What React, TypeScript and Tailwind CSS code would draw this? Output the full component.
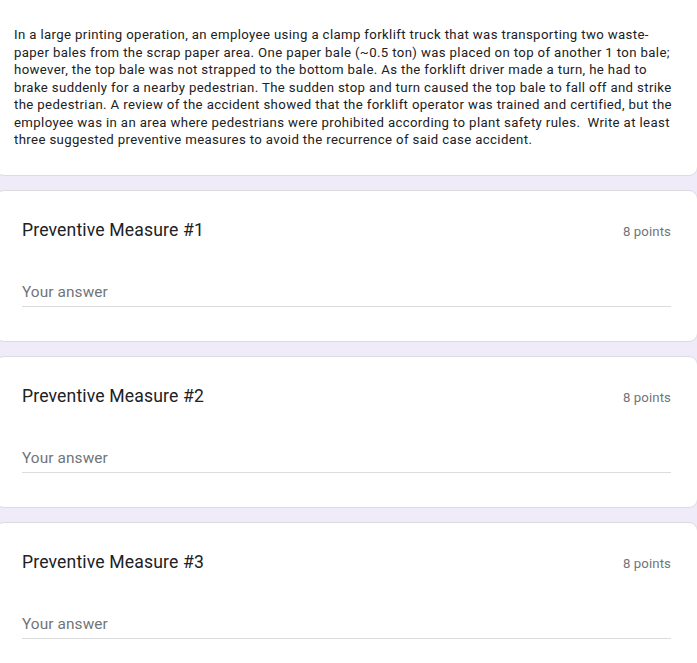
import React from "react";

const font = { fontFamily: "Roboto, 'Liberation Sans', Arial, sans-serif" };

function Question({ n }: { n: number }) {
  return (
    <div className="ml-[-5px] w-[703px] bg-white border border-[#dadce0] rounded-[9px] px-[26px] pt-[26px] pb-[34px]">
      <div className="flex items-start justify-between h-[26px]">
        <div className="text-[17.6px] leading-[26px] text-[#202124] tracking-[0.14px]">
          Preventive Measure #{n}
        </div>
        <div className="mt-[3px] text-[13.2px] leading-[23px] text-[#70757a] tracking-[0.1px]">8 points</div>
      </div>
      <div className="mt-[39px] border-b border-[#dadce0] pb-[4px]">
        <div className="text-[15.4px] leading-[20px] text-[#70757a] tracking-[0.1px]">Your answer</div>
      </div>
    </div>
  );
}

export default function App() {
  return (
    <div className="w-[697px] h-[663px] overflow-hidden bg-[#f0ebf8]" style={font}>
      <div className="flex flex-col gap-[14px]">
        <div className="ml-[-5px] w-[703px] mt-[-10px] bg-white border border-[#dadce0] rounded-[9px] pl-[18px] pr-[24px] pt-[35px] pb-[26px]">
          <p className="text-[13.2px] leading-[17.5px] text-[#202124] tracking-[0.37px]">
            In a large printing operation, an employee using a clamp forklift truck that was transporting two waste-paper bales from the scrap paper area. One paper bale (~0.5 ton) was placed on top of another 1 ton bale; however, the top bale was not strapped to the bottom bale. As the forklift driver made a turn, he had to brake suddenly for a nearby pedestrian. The sudden stop and turn caused the top bale to fall off and strike the pedestrian. A review of the accident showed that the forklift operator was trained and certified, but the employee was in an area where pedestrians were prohibited according to plant safety rules.{"\u00a0 "}Write at least three suggested preventive measures to avoid the recurrence of said case accident.
          </p>
        </div>
        <Question n={1} />
        <Question n={2} />
        <Question n={3} />
      </div>
    </div>
  );
}
